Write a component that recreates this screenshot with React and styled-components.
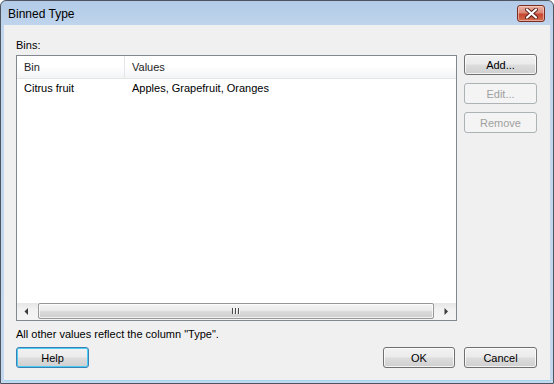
import React from "react";
import styled, { createGlobalStyle, css } from "styled-components";

const Global = createGlobalStyle`
  html, body { margin: 0; padding: 0; background: #ffffff; }
  body { font-family: "Liberation Sans", Arial, sans-serif; font-size: 11px; color: #000; }
  * { box-sizing: border-box; }
`;

const Window = styled.div`
  width: 554px;
  height: 384px;
  border: 1px solid #4d5560;
  border-radius: 6px 6px 0 0;
  background: linear-gradient(#b3cbe7 0%, #c2d6ee 30px, #c4d8ef 100%);
  display: flex;
  flex-direction: column;
  padding: 0 3px 3px 3px;
  overflow: hidden;
`;

const TitleBar = styled.div`
  height: 24px;
  flex: none;
  display: flex;
  align-items: flex-start;
  justify-content: space-between;
  padding: 4px 5px 0 4px;
`;

const Title = styled.div`
  font-size: 12px;
  line-height: 16px;
  color: #000;
  padding-top: 1px;
`;

const CloseButton = styled.div`
  width: 28px;
  height: 17px;
  border: 1px solid #7a2c22;
  border-radius: 3px;
  background: linear-gradient(#eab2a5 0%, #dc8674 45%, #c6452f 55%, #d0704f 100%);
  box-shadow: inset 0 0 0 1px rgba(255, 220, 210, 0.55);
  display: flex;
  align-items: center;
  justify-content: center;
`;

const Client = styled.div`
  flex: 1;
  background: #f0f0f0;
  display: flex;
  flex-direction: column;
  padding: 12px 13px 11px 12px;
  box-shadow: 0 1px 0 #9fd6ef;
`;

const Label = styled.div`
  line-height: 16px;
  height: 16px;
  margin-bottom: 2px;
`;

const Main = styled.div`
  display: flex;
  gap: 7px;
  height: 266px;
`;

const ListBox = styled.div`
  flex: 1;
  border: 1px solid #828790;
  background: #ffffff;
  display: flex;
  flex-direction: column;
`;

const HeaderRow = styled.div`
  display: flex;
  height: 23px;
  flex: none;
  background: linear-gradient(#ffffff 0%, #ffffff 45%, #f3f4f6 100%);
  border-bottom: 1px solid #e5e5e5;
`;

const HeaderCell = styled.div`
  width: ${(p) => (p.$width ? `${p.$width}px` : "auto")};
  flex: ${(p) => (p.$width ? "none" : "1")};
  padding-left: ${(p) => p.$pad}px;
  line-height: 22px;
  border-right: ${(p) => (p.$width ? "1px solid #e3e5e8" : "none")};
  color: #1e1e1e;
`;

const Rows = styled.div`
  flex: 1;
`;

const Row = styled.div`
  display: flex;
  height: 18px;
  line-height: 18px;
`;

const Cell = styled.div`
  width: ${(p) => (p.$width ? `${p.$width}px` : "auto")};
  flex: ${(p) => (p.$width ? "none" : "1")};
  padding-left: ${(p) => p.$pad}px;
  white-space: nowrap;
`;

const HScroll = styled.div`
  height: 17px;
  flex: none;
  display: flex;
  align-items: stretch;
  background: linear-gradient(#e6e6e6 0%, #f2f2f2 40%, #f4f4f4 100%);
`;

const Arrow = styled.div`
  width: 19px;
  flex: none;
  display: flex;
  align-items: center;
  justify-content: center;
`;

const Track = styled.div`
  flex: 1;
  display: flex;
  padding: 0 3px 1px 2px;
`;

const Thumb = styled.div`
  flex: 1;
  border: 1px solid #979797;
  border-radius: 2px;
  background: linear-gradient(#f5f5f5 0%, #ebebeb 45%, #d9d9d9 55%, #cfcfcf 100%);
  box-shadow: inset 0 0 0 1px rgba(255, 255, 255, 0.7);
  display: flex;
  align-items: center;
  justify-content: center;
`;

const Grip = styled.div`
  display: flex;
  gap: 1px;
`;

const GripLine = styled.div`
  width: 1px;
  height: 6px;
  background: #4a4a4a;
  box-shadow: 1px 0 0 #f6f6f6;
  margin-right: 1px;
`;

const SideButtons = styled.div`
  width: 73px;
  flex: none;
  display: flex;
  flex-direction: column;
  gap: 8px;
  margin-top: -1px;
`;

const Button = styled.div`
  width: ${(p) => p.$width || 73}px;
  height: 21px;
  border: 1px solid #707070;
  border-radius: 3px;
  background: linear-gradient(#f2f2f2 0%, #ebebeb 48%, #dddddd 52%, #cfcfcf 100%);
  box-shadow: inset 0 0 0 1px rgba(255, 255, 255, 0.75);
  display: flex;
  align-items: center;
  justify-content: center;
  line-height: 16px;
  color: #000;
  ${(p) =>
    p.disabled &&
    css`
      border-color: #adb2b5;
      background: #f4f4f4;
      box-shadow: none;
      color: #a0a0a0;
    `}
  ${(p) =>
    p.$focused &&
    css`
      border-color: #3c7fb1;
      background: linear-gradient(#eaf6fd 0%, #d9f0fc 48%, #bee6fd 52%, #a7d9f5 100%);
      background: linear-gradient(#f2f2f2 0%, #ebebeb 48%, #dddddd 52%, #cfcfcf 100%);
      box-shadow: inset 0 0 0 1px #48cdf9;
    `}
`;

const Note = styled.div`
  line-height: 16px;
  margin-top: 5px;
`;

const Footer = styled.div`
  display: flex;
  align-items: center;
  margin-top: 5px;
  gap: 9px;
`;

const Spacer = styled.div`
  flex: 1;
`;

function CloseGlyph() {
  return (
    <svg width="13" height="11" viewBox="0 0 13 11">
      <path d="M2 1.5 L11 9.5 M11 1.5 L2 9.5" stroke="#5a1d16" strokeWidth="4" strokeLinecap="round" />
      <path d="M2 1.5 L11 9.5 M11 1.5 L2 9.5" stroke="#ffffff" strokeWidth="2.2" strokeLinecap="round" />
    </svg>
  );
}

function ArrowGlyph({ dir }) {
  const d = dir === "left" ? "M4 0 L4 7 L0.5 3.5 Z" : "M0.5 0 L0.5 7 L4 3.5 Z";
  return (
    <svg width="5" height="7" viewBox="0 0 5 7">
      <path d={d} fill="#3c3c3c" />
    </svg>
  );
}

export default function App() {
  return (
    <>
      <Global />
      <Window>
        <TitleBar>
          <Title>Binned Type</Title>
          <CloseButton>
            <CloseGlyph />
          </CloseButton>
        </TitleBar>
        <Client>
          <Label>Bins:</Label>
          <Main>
            <ListBox>
              <HeaderRow>
                <HeaderCell $width={108} $pad={7}>Bin</HeaderCell>
                <HeaderCell $pad={7}>Values</HeaderCell>
              </HeaderRow>
              <Rows>
                <Row>
                  <Cell $width={108} $pad={7}>Citrus fruit</Cell>
                  <Cell $pad={7}>Apples, Grapefruit, Oranges</Cell>
                </Row>
              </Rows>
              <HScroll>
                <Arrow>
                  <ArrowGlyph dir="left" />
                </Arrow>
                <Track>
                  <Thumb>
                    <Grip>
                      <GripLine />
                      <GripLine />
                      <GripLine />
                    </Grip>
                  </Thumb>
                </Track>
                <Arrow>
                  <ArrowGlyph dir="right" />
                </Arrow>
              </HScroll>
            </ListBox>
            <SideButtons>
              <Button>Add...</Button>
              <Button disabled>Edit...</Button>
              <Button disabled>Remove</Button>
            </SideButtons>
          </Main>
          <Note>All other values reflect the column "Type".</Note>
          <Footer>
            <Button $focused>Help</Button>
            <Spacer />
            <Button $width={72}>OK</Button>
            <Button>Cancel</Button>
          </Footer>
        </Client>
      </Window>
    </>
  );
}
